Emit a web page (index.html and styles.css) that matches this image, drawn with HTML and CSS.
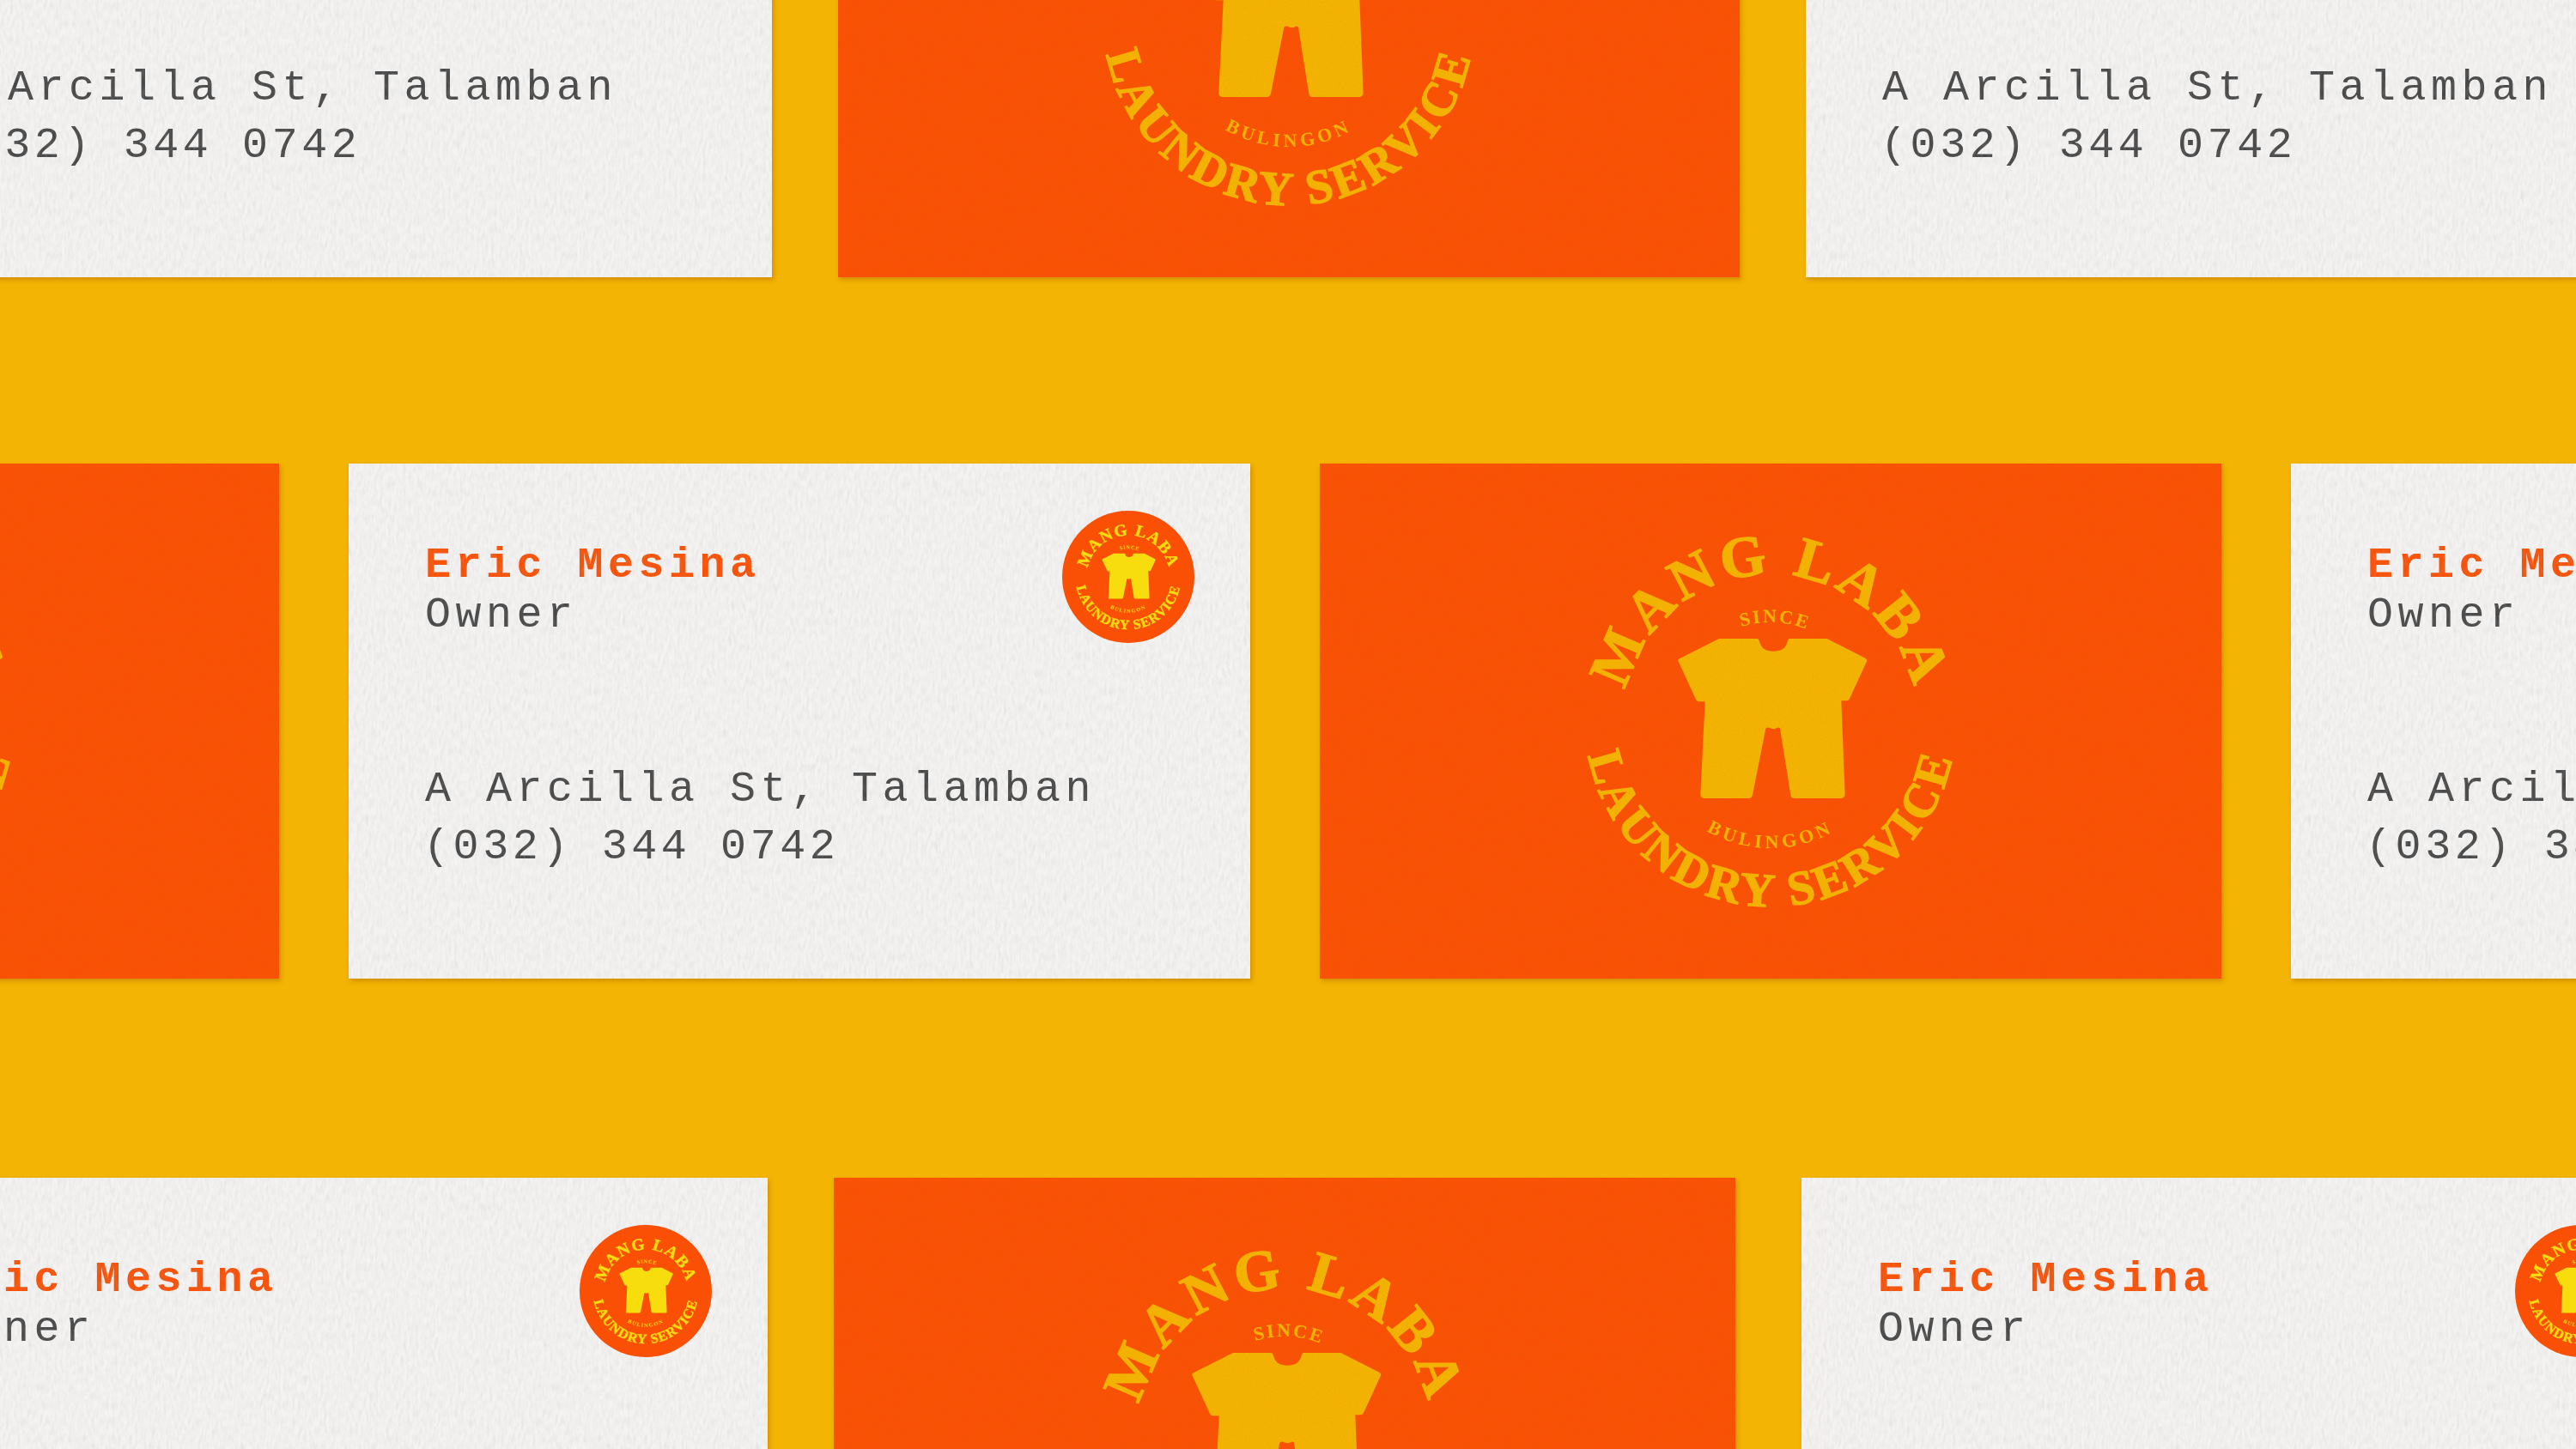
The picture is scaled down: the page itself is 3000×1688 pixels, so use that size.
FILE: index.html
```html
<!DOCTYPE html>
<html lang="en">
<head>
    <meta charset="UTF-8">
    <title>Mang Laba Laundry Service</title>
    <link rel="stylesheet" href="styles.css">
</head>
<body>

<svg class="defs" width="0" height="0">
    <symbol id="mark" viewBox="-240 -240 480 480">
        <path id="arcTop" fill="none" d="M0 171A171 171 0 1 1 0 -171A171 171 0 1 1 0 171"/>
        <path id="arcBottom" fill="none" d="M0 -216A216 216 0 1 0 0 216A216 216 0 1 0 0 -216"/>
        <path id="arcSince" fill="none" d="M0 115A115 115 0 1 1 0 -115A115 115 0 1 1 0 115"/>
        <path id="arcTown" fill="none" d="M0 -148A148 148 0 1 0 0 148A148 148 0 1 0 0 -148"/>

        <text class="mark-big"><textPath href="#arcTop" startOffset="50%" text-anchor="middle">MANG LABA</textPath></text>
        <text class="mark-mid"><textPath href="#arcBottom" startOffset="50%" text-anchor="middle">LAUNDRY SERVICE</textPath></text>
        <text class="mark-small"><textPath href="#arcSince" startOffset="50.7%" text-anchor="middle">SINCE</textPath></text>
        <text class="mark-small mark-town"><textPath href="#arcTown" startOffset="50%" text-anchor="middle">BULINGON</textPath></text>

        <!-- shirt + shorts, traced at 3x so it is scaled back down -->
        <path class="mark-shirt" transform="scale(.3333) translate(-785 -780)" d="M605 492H738C742 492 745 497 748 508C755 528 770 536 795 536C820 536 835 528 842 508C845 497 848 492 852 492H982L1116 560C1122 564 1123 568 1120 574L1062 700C1060 706 1056 709 1050 709H1032L1045 1036C1045 1044 1040 1050 1032 1050H868C860 1050 856 1046 855 1038L818 806C815 802 810 802 806 805C800 809 790 809 784 805C780 802 772 802 768 806L722 1038C720 1046 716 1050 708 1050H552C544 1050 540 1044 540 1036L556 712H536C530 712 527 709 524 704L464 574C460 568 462 564 468 561Z"/>
    </symbol>
</svg>

<main class="sheet">

    <div class="row row-top">
        <div class="card card-white">
            <div class="card-text">
                <div class="who"><div class="name">Eric Mesina</div><div class="role">Owner</div></div>
                <div class="where"><div>A Arcilla St, Talamban</div><div class="phone">(032) 344 0742</div></div>
            </div>
            <div class="badge"><svg class="badge-mark"><use href="#mark"/></svg></div>
        </div>
        <div class="card card-orange"><svg class="logo"><use href="#mark"/></svg></div>
        <div class="card card-white">
            <div class="card-text">
                <div class="who"><div class="name">Eric Mesina</div><div class="role">Owner</div></div>
                <div class="where"><div>A Arcilla St, Talamban</div><div class="phone">(032) 344 0742</div></div>
            </div>
            <div class="badge"><svg class="badge-mark"><use href="#mark"/></svg></div>
        </div>
    </div>

    <div class="row row-mid">
        <div class="card card-orange"><svg class="logo"><use href="#mark"/></svg></div>
        <div class="card card-white">
            <div class="card-text">
                <div class="who"><div class="name">Eric Mesina</div><div class="role">Owner</div></div>
                <div class="where"><div>A Arcilla St, Talamban</div><div class="phone">(032) 344 0742</div></div>
            </div>
            <div class="badge"><svg class="badge-mark"><use href="#mark"/></svg></div>
        </div>
        <div class="card card-orange"><svg class="logo"><use href="#mark"/></svg></div>
        <div class="card card-white">
            <div class="card-text">
                <div class="who"><div class="name">Eric Mesina</div><div class="role">Owner</div></div>
                <div class="where"><div>A Arcilla St, Talamban</div><div class="phone">(032) 344 0742</div></div>
            </div>
            <div class="badge"><svg class="badge-mark"><use href="#mark"/></svg></div>
        </div>
    </div>

    <div class="row row-low">
        <div class="card card-white">
            <div class="card-text">
                <div class="who"><div class="name">Eric Mesina</div><div class="role">Owner</div></div>
                <div class="where"><div>A Arcilla St, Talamban</div><div class="phone">(032) 344 0742</div></div>
            </div>
            <div class="badge"><svg class="badge-mark"><use href="#mark"/></svg></div>
        </div>
        <div class="card card-orange"><svg class="logo"><use href="#mark"/></svg></div>
        <div class="card card-white">
            <div class="card-text">
                <div class="who"><div class="name">Eric Mesina</div><div class="role">Owner</div></div>
                <div class="where"><div>A Arcilla St, Talamban</div><div class="phone">(032) 344 0742</div></div>
            </div>
            <div class="badge"><svg class="badge-mark"><use href="#mark"/></svg></div>
        </div>
    </div>

</main>

</body>
</html>
```

FILE: styles.css
```css
:root {
    --yellow: #f3b403;
    --orange: #f95005;
    --paper: #f4f3f2;
    --ink: #484848;
    --noise-paper: url("data:image/svg+xml,%3Csvg xmlns='http://www.w3.org/2000/svg' width='600' height='600'%3E%3Cfilter id='n'%3E%3CfeTurbulence type='fractalNoise' baseFrequency='.3 .1' numOctaves='3' stitchTiles='stitch'/%3E%3CfeColorMatrix values='0 0 0 0 .45 0 0 0 0 .45 0 0 0 0 .45 .7 .7 .7 0 -.85'/%3E%3C/filter%3E%3Crect width='600' height='600' filter='url(%23n)'/%3E%3C/svg%3E");
    --noise-grain: url("data:image/svg+xml,%3Csvg xmlns='http://www.w3.org/2000/svg' width='400' height='400'%3E%3Cfilter id='g'%3E%3CfeTurbulence type='fractalNoise' baseFrequency='.7' numOctaves='2' stitchTiles='stitch'/%3E%3CfeColorMatrix values='0 0 0 0 .7 0 0 0 0 .2 0 0 0 0 0 .6 .6 .6 0 -.8'/%3E%3C/filter%3E%3Crect width='400' height='400' filter='url(%23g)'/%3E%3C/svg%3E");
}

html, body {
    margin: 0;
    height: 100%;
}

body {
    background-color: var(--yellow);
    overflow: hidden;
    font-family: "Liberation Mono", "DejaVu Sans Mono", monospace;
}

.defs { position: absolute; }

.sheet {
    display: flex;
    flex-direction: column;
    width: 3000px;
    height: 1688px;
    overflow: hidden;
}

.row { display: flex; flex: none; }
.row-top { margin: -277px 0 0 -151px; gap: 77px; }
.row-mid { margin: 217px 0 0 -725px; gap: 81px; }
.row-low { margin: 232px 0 0 -156px; gap: 77px; }

.card {
    flex: none;
    position: relative;
    width: 1050px;
    height: 600px;
    box-sizing: border-box;
    box-shadow: 2px 3px 5px rgba(170, 100, 0, 0.45);
}
.card::after {
    content: "";
    position: absolute;
    inset: 0;
    pointer-events: none;
}

/* white side */
.card-white {
    background: var(--paper);
    display: flex;
    justify-content: space-between;
    padding: 0 0 0 89px;
}
.card-white::after {
    background-image: var(--noise-paper);
    opacity: 0.3;
}

.card-text {
    color: var(--ink);
    font-size: 50px;
    letter-spacing: 5.5px;
    white-space: nowrap;
}

.who { margin-top: 90px; line-height: 58px; }
.name { color: var(--orange); font-weight: 700; }
.where { margin-top: 140px; line-height: 67px; }
.phone { letter-spacing: 4.6px; margin-left: -2px; }

.badge {
    position: absolute;
    z-index: 1;
    top: 55px;
    left: 831px;
    width: 154px;
    height: 154px;
    border-radius: 50%;
    background: var(--orange);
    color: #f7dd0e;
    display: flex;
    align-items: center;
    justify-content: center;
}
.badge-mark { width: 136px; height: 136px; }

/* orange side */
.card-orange {
    background: var(--orange);
    color: var(--yellow);
    display: flex;
    align-items: center;
    justify-content: center;
}
.card-orange::after {
    background-image: var(--noise-grain);
    opacity: 0.35;
}

.logo { width: 480px; height: 480px; }

/* the round mark */
#mark text {
    fill: currentColor;
    stroke: currentColor;
    stroke-width: 1.4px;
    font-family: "Liberation Serif", serif;
    font-weight: 700;
}
.mark-big { font-size: 68px; letter-spacing: 5px; }
.mark-mid { font-size: 56px; letter-spacing: 4px; }
#mark .mark-small { font-size: 22px; letter-spacing: 2.5px; stroke-width: 0; }
#mark .mark-town { letter-spacing: 4.6px; }
.mark-shirt { fill: currentColor; }
```
